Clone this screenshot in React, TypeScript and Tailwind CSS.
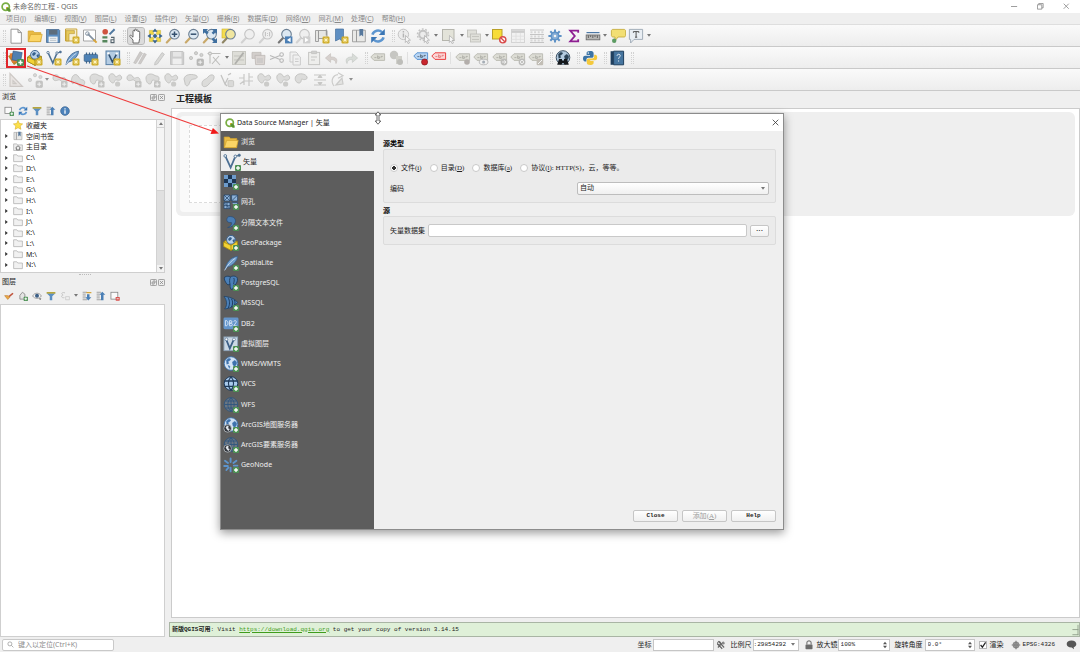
import type { ReactNode } from "react";

const BLUE = "#4b7fb5";
const DARK = "#34506e";
const GREY = "#c3c3c3";

/* ---------- badges shared by several icons ---------- */

const NewBadge = () => (
  <g>
    <rect x="8.5" y="8.5" width="7" height="7" rx="1.2" fill="#d0ad2b" />
    <path d="M12 9.6v4.8M9.6 12h4.8M10.4 10.4l3.2 3.2M13.6 10.4l-3.2 3.2" stroke="#fff6c4" strokeWidth="0.9" />
  </g>
);

const PlusBadge = () => (
  <g>
    <rect x="9" y="9" width="7" height="7" rx="1.2" fill="#4d9155" />
    <path d="M12.5 10.3v4.4M10.3 12.5h4.4" stroke="#fff" strokeWidth="1.5" />
  </g>
);

const GreyBadge = () => (
  <g>
    <rect x="9" y="9" width="6.5" height="6.5" rx="1.2" fill="#b9b9b7" />
    <path d="M12.2 10.2v4M10.2 12.2h4" stroke="#f1f1f1" strokeWidth="1" />
  </g>
);

const Cursor = () => <path d="M8.5 7.5l5 4.6-2.4.2 1.4 2.6-1.4.7-1.3-2.6-1.5 1.5z" fill="#f6f6f6" stroke="#a9a9a9" strokeWidth="0.7" />;

const Lens = ({ fill = "#dce8f2", stroke = "#6b7f93", handle = "#c9a96a", children }: { fill?: string; stroke?: string; handle?: string; children?: ReactNode }) => (
  <g>
    <path d="M6 10L1.8 14.4" stroke={handle} strokeWidth="2.2" strokeLinecap="round" />
    <circle cx="9.5" cy="6.2" r="4.8" fill={fill} stroke={stroke} strokeWidth="1.1" />
    {children}
  </g>
);

const Globe = ({ fill = "#c9dcef", line = "#3f6ea1", land = false }: { fill?: string; line?: string; land?: boolean }) => (
  <g stroke={line} strokeWidth="0.9" fill="none">
    <circle cx="8" cy="7.5" r="6.8" fill={fill} />
    {land ? (
      <path d="M3.4 4l2.4-1.8 2 .8-1 1.6-1.8 1 .8 1.8-2 .8zM9.4 6l2.4-1.8 1.8 1.8v2l-1.8 2.6-1.8-1.6zM5 9.4l2 .8-.6 2.2z" fill={line} strokeWidth="0.4" />
    ) : (
      <path d="M1.4 7.5h13.2M8 .8v13.4M2.4 4h11.2M2.4 11h11.2M8 .8C3.8 4 3.8 11 8 14.2M8 .8c4.2 3.2 4.2 10.2 0 13.4" />
    )}
  </g>
);

const VNodes = ({ color = "#4c6f92" }: { color?: string }) => (
  <g stroke={color} fill="none">
    <path d="M2 2.5l4.8 10.5L11 3" strokeWidth="1.6" />
    <path d="M11 3l3.5-1" strokeWidth="1" />
    <circle cx="2" cy="2.6" r="1.2" fill="#f5f5f5" strokeWidth="0.8" />
    <circle cx="11" cy="3" r="1.2" fill="#f5f5f5" strokeWidth="0.8" />
    <circle cx="14.4" cy="2" r="1.1" fill={color} strokeWidth="0.5" />
  </g>
);

const Feather = () => (
  <g>
    <path d="M2 15C3 8 7 2.5 14.5 1.2 14.8 5 10 11 4.4 12z" fill="#6f9dcb" stroke="#3b618a" strokeWidth="0.8" />
    <path d="M1.6 15.4C4.5 10 8 6 12.4 3.2" stroke="#dbe9f6" strokeWidth="0.8" fill="none" />
  </g>
);

const Shape = ({ d }: { d: string }) => <path d={d} fill="#d7d7d5" stroke="#b4b4b2" strokeWidth="0.9" strokeLinejoin="round" />;

const Label = ({ fill = "#dcdcd4", stroke = "#bdbdb5", ink = "#a9a9a1", y = 3 }: { fill?: string; stroke?: string; ink?: string; y?: number }) => (
  <g transform={`translate(0 ${y})`}>
    <path d="M.8 4L4 .8h10.6v6.6H4z" fill={fill} stroke={stroke} strokeWidth="1" />
    <path d="M4.4 4.6h2M7.6 2.4v3h1.8v-1.6H7.6M11 4.8v-1.4h1.8" stroke={ink} strokeWidth="0.8" fill="none" />
  </g>
);

/* ---------- 16 × 16 icon drawings ---------- */

const icons: Record<string, ReactNode> = {
  new: <path d="M3 1.2h7l3.4 3.4v10.6H3zM10 1.2v3.4h3.4" fill="#fff" stroke="#8d8d8d" strokeWidth="0.9" />,
  open: (
    <g stroke="#d3a32c" strokeWidth="0.7">
      <path d="M1.2 13.6V3h5l1.4 1.6h6.2v9z" fill="#e9bb45" />
      <path d="M1.4 13.6L3.6 6.4h11.6l-1.8 7.2z" fill="#fbd566" />
    </g>
  ),
  save: (
    <g>
      <path d="M1.5 1.5h12.4l.8.8v12.2H1.5z" fill="#5d8fc1" stroke="#476a8f" strokeWidth="0.8" />
      <rect x="4" y="2" width="8.4" height="4.6" fill="#5d6d7c" />
      <rect x="3.6" y="8.6" width="9" height="5.8" fill="#eef1f3" />
      <path d="M5 10.4h6.2M5 12.4h6.2" stroke="#b4bcc4" strokeWidth="0.8" />
    </g>
  ),
  layoutNew: (
    <g>
      <path d="M1.5 1h11.3v12H1.5z" fill="#f6efd4" stroke="#c9a53a" strokeWidth="1" />
      <path d="M2 2.6h8.4v3H5v7.2H2z" fill="#e6c95c" stroke="#b8962d" strokeWidth="0.6" />
      <NewBadge />
    </g>
  ),
  layoutManager: (
    <g>
      <path d="M1.5 2h12v11h-12z" fill="#fff" stroke="#9b9b9b" strokeWidth="0.9" />
      <path d="M5.6 5.6l7 7" stroke="#8392a1" strokeWidth="1.6" />
      <circle cx="5.4" cy="5.6" r="1.8" fill="none" stroke="#8392a1" strokeWidth="1" />
      <path d="M11.6 11.6l3 3" stroke="#d9a63a" strokeWidth="2" />
    </g>
  ),
  style: (
    <g>
      <circle cx="4.2" cy="3.8" r="2.8" fill="#cf5440" />
      <path d="M8.5 6.4L13.6 1.2" stroke="#4f789f" strokeWidth="2" />
      <path d="M1.4 8.2h5v2.4h-5zM1.4 12h5v2.6h-5z" fill="#56875c" />
      <path d="M10 9.4h3v5.2h-3v-2.8h3" stroke="#56656e" strokeWidth="1.1" fill="none" />
    </g>
  ),
  hand: (
    <path
      d="M5 15V12L1.8 8.4c-.4-1 .8-1.6 1.5-.8L5 9.2V3.2c0-1.2 1.6-1.2 1.6 0V2c0-1.2 1.7-1.2 1.7 0v.6c0-1.1 1.7-1 1.7.2v1c.2-1 1.7-.8 1.7.3v6.4L10.8 15z"
      fill="#fff"
      stroke="#5e5e5e"
      strokeWidth="0.9"
      strokeLinejoin="round"
    />
  ),
  panSelection: (
    <g>
      <path d="M2.4 2.4h4v4h-4zM9.6 2.4h4v4h-4zM2.4 9.6h4v4h-4zM9.6 9.6h4v4h-4z" fill="#f1d848" stroke="#c5ac2f" strokeWidth="0.5" />
      <path d="M8 .4l2.6 3.4H5.4zM8 15.600l2.600-3.400H5.400zM.4 8l3.400-2.600v5.200zM15.600 8l-3.400-2.600v5.200z" fill="#39648f" />
      <path d="M8 5.600L10.400 8 8 10.400 5.600 8z" fill="#39648f" />
    </g>
  ),
  zoomIn: (
    <Lens>
      <path d="M9.5 3.4v5.6M6.7 6.2h5.6" stroke={DARK} strokeWidth="1.5" />
    </Lens>
  ),
  zoomOut: (
    <Lens>
      <path d="M6.7 6.2h5.6" stroke={DARK} strokeWidth="1.5" />
    </Lens>
  ),
  zoomFull: (
    <g>
      <Lens />
      <path d="M1 1h5L4.6 2.6 6.6 4.6 4.8 6.4 2.6 4.4 1 6zM15 1v5l-1.6-1.4-2 2L9.6 4.8l2-2L10 1zM15 15h-5l1.6-1.6-2-2 1.8-1.8 2 2L15 10z" fill="#3f6f9f" />
    </g>
  ),
  zoomSelection: (
    <g>
      <rect x="1" y="1" width="8" height="9" fill="#f4dc4e" stroke="#cdb12f" strokeWidth="0.6" />
      <Lens fill="#f0e6a0" handle="#8f8665" />
    </g>
  ),
  zoomLayer: <Lens fill="#efefef" stroke="#c4c4c4" handle="#d2d2d2" />,
  zoomNative: (
    <Lens fill="#efefef" stroke="#c4c4c4" handle="#d2d2d2">
      <path d="M7.4 4v4.4M11.6 4v4.4M9.5 5v.8M9.5 7v.8" stroke="#b9b9b9" strokeWidth="0.9" />
    </Lens>
  ),
  zoomLast: (
    <g>
      <Lens handle="#777" />
      <rect x="8" y="8.4" width="7.4" height="7" fill={BLUE} />
      <path d="M13.6 9.6L10 11.9l3.6 2.3z" fill="#fff" />
    </g>
  ),
  zoomNext: (
    <g>
      <Lens fill="#efefef" stroke="#c4c4c4" handle="#d2d2d2" />
      <rect x="8" y="8.4" width="7.4" height="7" fill="#cfcfcf" />
      <path d="M10 9.6l3.6 2.3-3.6 2.3z" fill="#fff" />
    </g>
  ),
  mapView: (
    <g>
      <path d="M1.5 2.5h3v11h-3zM4.5 2.5H13v8H4.5z" fill="#e6e6e4" stroke="#989898" strokeWidth="0.9" />
      <path d="M12.4 1.6v6" stroke="#989898" strokeWidth="1.2" />
      <NewBadge />
    </g>
  ),
  bookmarkNew: (
    <g>
      <path d="M2.5 1h8v13.4L6.5 11l-4 2z" fill="#5f8fc2" stroke="#48719d" strokeWidth="0.7" />
      <NewBadge />
    </g>
  ),
  bookmarks: (
    <g>
      <path d="M1.5 2.2h4v11.6h-4zM5.5 2.2h8.8v11.6H5.5z" fill="#e9e9e7" stroke="#9b9b9b" strokeWidth="0.9" />
      <path d="M8.4 1h3.8v7.6l-1.9-1.7-1.9 1.7z" fill="#56789c" />
    </g>
  ),
  refresh: (
    <g fill="none" stroke="#5d96d0" strokeWidth="2.6">
      <path d="M2.4 6.6C3.8 2.4 9 1.2 12 4.2M13.6 9.4c-1.4 4.2-6.6 5.4-9.6 2.4" />
      <path d="M14.8 1v6H8.8zM1.2 15V9h6z" fill="#3a76b5" stroke="none" />
    </g>
  ),
  identify: (
    <g>
      <circle cx="6.4" cy="6.4" r="5.2" fill="#ececec" stroke={GREY} />
      <path d="M6.4 3v1.4M6.4 5.4v4" stroke="#b4b4b4" strokeWidth="1.4" />
      <Cursor />
    </g>
  ),
  action: (
    <g>
      <circle cx="7" cy="6.6" r="3.8" fill="#ececec" stroke={GREY} strokeWidth="2" />
      <circle cx="7" cy="6.6" r="5.6" fill="none" stroke={GREY} strokeWidth="1.4" strokeDasharray="1.8 1.7" />
      <Cursor />
    </g>
  ),
  select: (
    <g>
      <rect x="1.5" y="1.5" width="11.5" height="11" fill="#e3e3d9" stroke="#b5b5ad" />
      <Cursor />
    </g>
  ),
  selectForm: (
    <g fill="#e0e0da" stroke="#bfbfb9" strokeWidth="0.8">
      <rect x="1.5" y="2" width="9" height="7" />
      <rect x="4.5" y="6" width="10" height="8" />
      <path d="M6 8.5h7M6 11.5h7" />
    </g>
  ),
  deselect: (
    <g>
      <rect x="1.5" y="1.5" width="9.5" height="9.5" fill="#f7dc38" stroke="#b9a028" />
      <circle cx="11.8" cy="11.8" r="3.1" fill="#fff" stroke="#d94a4a" strokeWidth="1.4" />
      <path d="M9.8 9.8l4 4" stroke="#d94a4a" strokeWidth="1.3" />
    </g>
  ),
  table: (
    <g>
      <rect x="1.5" y="1.5" width="13" height="13" fill="#f1f1f1" stroke="#d4d4d4" />
      <path d="M1.5 3.6h13" stroke="#cccccc" strokeWidth="2.6" />
      <path d="M6 5v9.5M10.4 5v9.5M1.5 8.2h13M1.5 11.4h13" stroke="#dedede" strokeWidth="0.8" />
    </g>
  ),
  calculator: (
    <g stroke="#c4c4c4">
      <path d="M1 2h14M1 6.5h14M1 10.5h14M1 14.5h14" strokeWidth="1" />
      <path d="M1.5 4.2h13M1.5 8.6h13M1.5 12.6h13" strokeWidth="2" strokeDasharray="2 1.6" stroke="#d6d6d6" />
    </g>
  ),
  gear: (
    <g stroke="#5f92c6" fill="none">
      <path d="M8 1.400v13.200M1.400 8h13.200M3.300 3.300l9.400 9.400M12.700 3.300l-9.400 9.400" strokeWidth="2" />
      <circle cx="8" cy="8" r="3.8" fill="#86aed6" strokeWidth="1.4" />
      <circle cx="8" cy="8" r="1.3" fill="#f2f2f2" stroke="none" />
    </g>
  ),
  sigma: <path d="M12.2 4.8V2.600H4.200L8.800 8l-4.600 5.400h8v-2.200" fill="none" stroke="#8e1f92" strokeWidth="1.8" />,
  measure: (
    <g>
      <path d="M1.5 4.6h13" stroke="#4c78a5" strokeWidth="1.2" />
      <rect x="1.2" y="7" width="13.6" height="4.8" fill="#b5b5b3" stroke="#6d6d6d" strokeWidth="0.9" />
      <path d="M3.4 7.4v2.6M5.6 7.4v1.6M7.8 7.4v2.6M10 7.4v1.6M12.4 7.4v2.6" stroke="#4f4f4f" strokeWidth="0.8" />
    </g>
  ),
  mapTips: (
    <g>
      <path d="M3 1.4h11c1 0 1.6.8 1.6 1.6v4.4c0 1-.8 1.6-1.6 1.6H8L5 13V9H3C2 9 1.4 8.2 1.4 7.4V3C1.4 2 2 1.4 3 1.4z" fill="#f2df74" stroke="#c6ae41" strokeWidth="0.9" />
      <circle cx="4.2" cy="12.8" r="2.2" fill="#5c9b62" />
    </g>
  ),
  annotation: (
    <g>
      <path d="M1.4 1.4h13.2v10H6l-3.4 3.6v-3.6H1.4z" fill="#e9eef3" stroke="#9aa6b2" strokeWidth="0.9" />
      <path d="M5.4 4.8V3.600h5.400v1.200M8.100 3.600v5.600M7 9.200h2.200" stroke="#444" strokeWidth="0.9" fill="none" />
    </g>
  ),
  dataSource: (
    <g>
      <path d="M0 6l6-3 6 8-6 4z" fill="#b5872b" />
      <path d="M1.6 3.4l8-1 3 8.6-8.4 2z" fill="#e27e32" />
      <path d="M5.2 1l9 1.6-1.6 9-8.800-1.800z" fill="#4f7fb0" stroke="#33587f" strokeWidth="0.6" />
      <PlusBadge />
    </g>
  ),
  geopackage: (
    <g>
      <path d="M.6 7l5-3.6 8.8 3v5L8 15.4.6 11.4z" fill="#e3be22" stroke="#8f7714" strokeWidth="0.7" />
      <circle cx="8" cy="4.8" r="4.4" fill="#b9d0e8" stroke="#35608d" strokeWidth="0.9" />
      <path d="M5 4l2-2 2 1-1 2-2 1zM9.4 5.4l2-1.6.6 2.4-1.6 1.4z" fill="#35608d" />
      <path d="M.6 7L8 10.4l6.4-4v5L8 15.4.6 11.4z" fill="#f2d235" stroke="#8f7714" strokeWidth="0.6" />
      <path d="M8 10.4v5" stroke="#8f7714" strokeWidth="0.7" />
    </g>
  ),
  vector: <VNodes />,
  feather: <Feather />,
  memory: (
    <g>
      <path d="M3.5 2.4v11M6.5 2.4v11M9.5 2.4v11M12.5 2.4v11" stroke="#41698f" strokeWidth="1.2" />
      <rect x="1.2" y="4.4" width="13.4" height="7" rx="1" fill="#4e82b6" stroke="#34597f" strokeWidth="0.7" />
    </g>
  ),
  virtual: (
    <g>
      <rect x="1" y="1" width="13.6" height="13.6" fill="#b4cce3" stroke="#577ea5" />
      <path d="M3.4 3.4L7.4 12l4.4-8.4" fill="none" stroke="#2f4f71" strokeWidth="1.6" />
      <circle cx="3.4" cy="3.4" r="1.2" fill="#fff" />
      <circle cx="11.8" cy="3.6" r="1.2" fill="#fff" />
    </g>
  ),
  editsAll: (
    <g fill="#cdcac8" stroke="#b9b6b4" strokeWidth="0.5">
      <path d="M1.6 13L8 1.6l2.6 1.6L4 13.6zM6.4 13.6L12 3l2.4 1.4L8.6 14z" />
    </g>
  ),
  pencil: <path d="M4 12.6L11 2.6l2.4 1.6L6.4 14l-2.800 1z" fill="#d8d8d6" stroke="#bbb" strokeWidth="0.7" />,
  saveGrey: (
    <g>
      <path d="M1.5 1.5h12.4l.8.8v12.2H1.5z" fill="#cdcdcd" stroke="#bdbdbd" strokeWidth="0.8" />
      <rect x="4" y="2" width="8.4" height="4.6" fill="#e6e6e6" />
      <rect x="3.6" y="8.6" width="9" height="5.8" fill="#efefef" />
    </g>
  ),
  points: (
    <g fill="#d2d2d0" stroke="#b6b6b4" strokeWidth="0.7">
      <circle cx="3" cy="8" r="1.6" />
      <circle cx="8" cy="3.2" r="1.6" />
      <circle cx="13.4" cy="5" r="1.6" />
      <GreyBadge />
    </g>
  ),
  vertexTool: (
    <g fill="none" stroke="#bdbdbb" strokeWidth="1.1">
      <path d="M1.5 3.5h13M4 3.5v10M6 14L13 6M7 7l7 8" />
      <circle cx="4" cy="3.5" r="1.4" fill="#eee" />
    </g>
  ),
  editForm: (
    <g>
      <rect x="1.5" y="1.5" width="13" height="13" fill="#deded8" stroke="#c8c8c2" />
      <path d="M3 6h10M3 10h10" stroke="#c3c3bd" />
      <path d="M4 14L12.6 2.6" stroke="#b0b0ac" strokeWidth="1.8" />
    </g>
  ),
  trash: (
    <g>
      <path d="M2 2.4h9v6H2z" fill="#d2cecb" stroke="#c0bbb8" strokeWidth="0.8" />
      <path d="M5 5.400h10l-.6 9.200H5.600z" fill="#dad5d2" stroke="#bdb8b5" strokeWidth="0.8" />
      <path d="M8 8v5M10 8v5M12 8v5" stroke="#bbb" strokeWidth="0.8" />
    </g>
  ),
  cut: (
    <g fill="none" stroke="#b9b9b9" strokeWidth="1.1">
      <path d="M1 5.6L11 9.6M1 9.4L11 5.4" />
      <circle cx="12.6" cy="4.6" r="1.8" />
      <circle cx="12.6" cy="10.6" r="1.8" />
    </g>
  ),
  copy: (
    <g fill="#f0f0f0" stroke="#c7c7c7" strokeWidth="0.9">
      <path d="M3 2h6l2 2v8H3z" />
      <path d="M6 5h5l2.4 2v8H6z" />
      <path d="M8 9h3.6M8 11.5h3.6" />
    </g>
  ),
  paste: (
    <g fill="#eeeeec" stroke="#c6c6c4" strokeWidth="1">
      <rect x="2.6" y="2.4" width="11" height="12.2" />
      <path d="M5.6 1.2h5v2.4h-5z" fill="#d0d0ce" />
      <path d="M5 7h6M5 10h4" />
    </g>
  ),
  undo: <path d="M12 13.6c2-3.6.6-7-5.4-6.6V3.6L1.4 8l5.2 4.4V9.6c3-.4 5 .8 5.4 4z" fill="#d6d0cd" stroke="#c3bebb" strokeWidth="0.6" />,
  redo: <path d="M4 13.6C2 10 3.4 6.6 9.4 7V3.6L14.6 8l-5.2 4.4V9.6c-3-.4-5 .8-5.4 4z" fill="#d8dcd8" stroke="#c2c6c2" strokeWidth="0.6" />,
  label: <Label />,
  labelDiagram: (
    <g>
      <circle cx="6" cy="5" r="4.2" fill="#c6c6c2" />
      <path d="M8 6h6v8H8z" fill="#d0d0ca" />
      <circle cx="12" cy="12" r="3" fill="#bdbdb9" />
    </g>
  ),
  labelPin: (
    <g>
      <Label fill="#b7d4f3" stroke="#5b94d2" ink="#4a5a6a" y={2} />
      <circle cx="11.6" cy="12" r="3.1" fill="#c9252d" stroke="#7e1419" strokeWidth="0.6" />
    </g>
  ),
  labelRed: <Label fill="#fbd5d5" stroke="#e94141" ink="#e07070" y={2} />,
  labelPinGrey: (
    <g>
      <Label />
      <circle cx="12" cy="12" r="2.8" fill="#b3aeab" />
    </g>
  ),
  labelShow: (
    <g>
      <Label />
      <ellipse cx="10.6" cy="12" rx="4.4" ry="2.8" fill="#f0f0f0" stroke="#b0b0b0" strokeWidth="0.8" />
      <circle cx="10.6" cy="12" r="1.5" fill="#a5adb5" />
    </g>
  ),
  labelMove: (
    <g>
      <Label />
      <circle cx="12" cy="12" r="3.4" fill="#bcbcba" />
      <path d="M10 12h3.6M12.2 10.4l1.8 1.6-1.8 1.6" stroke="#f4f4f4" strokeWidth="0.9" fill="none" />
    </g>
  ),
  labelRotate: (
    <g>
      <Label />
      <circle cx="12" cy="12" r="3.4" fill="#bcbcba" />
      <circle cx="12" cy="12" r="1.6" stroke="#f4f4f4" strokeWidth="0.9" fill="none" />
    </g>
  ),
  labelEdit: (
    <g>
      <Label />
      <rect x="8.6" y="8.8" width="6.6" height="6.4" rx="1" fill="#c2beb6" />
      <path d="M10 14l4-4" stroke="#f4f4f4" />
    </g>
  ),
  metasearch: (
    <g>
      <Globe fill="#b4cbe0" line="#2b4256" land />
      <path d="M4 9h3v1.400h2V9h3l1.800 5.800H9.400l-.6-1.800H7.200l-.6 1.800H2.200z" fill="#14181c" />
    </g>
  ),
  python: (
    <g>
      <path d="M8 1c-3 0-3.4 1-3.4 2.2V5H8v.8H3.2C1.6 5.8 1 7 1 8.6s.8 2.9 2 2.9h1.4V9.8c0-1.2.8-2 2-2h3.4c1 0 1.8-.8 1.8-1.8V3.2C11.6 1.6 10.4 1 8 1z" fill="#3c74a5" />
      <path d="M8.2 15c3 0 3.4-1 3.4-2.2V11H8.2v-.8H13c1.6 0 2.2-1.2 2.2-2.8s-.8-2.6-2-2.6h-1v1.8c0 1.2-.8 2-2 2H6.6c-1 0-1.8.8-1.8 1.8v2.4c0 1.6 1.2 2.2 3.4 2.2z" fill="#f4c93c" />
      <circle cx="6.3" cy="3" r="0.7" fill="#fff" />
    </g>
  ),
  help: (
    <g>
      <path d="M1.6 1.2h3v13.6h-3z" fill="#20405f" />
      <path d="M4.6 1.2h10v13.6h-10z" fill="#46759f" stroke="#20405f" />
      <path d="M8 5.800c.2-2.200 3.600-2 3.200.2-.2 1.200-1.600 1.200-1.600 2.800M9.600 10.400v1.200" fill="none" stroke="#dfe9f2" strokeWidth="1" />
    </g>
  ),
  triangle: <path d="M2 1.6v12.8h12.4zM5 8.6v3h3z" fill="#e6e1de" stroke="#c4beba" strokeWidth="1.2" fillRule="evenodd" />,
  shapeMove: (
    <g>
      <Shape d="M1 6c0-4 5-4 6-1s4-1 6 1 1 5-2 4-3-3-5-2-5 1-5-2z" />
      <GreyBadge />
    </g>
  ),
  shapeRotate: <Shape d="M2 11C0 5 5 0 8 4s2 3 5 4 2 6-2 6-3-4-5-4-3 3-4 1z" />,
  shapeSimplify: (
    <g>
      <Shape d="M1 6C1 2 6 1 9 3s5 0 5 4-4 1-6 1-1 4-3 4-4-2-4-6z" />
      <GreyBadge />
    </g>
  ),
  reshape: <Shape d="M2 7C3 2 9 2 13 3s2 4-1 4-4 2-5 5-4 2-4-1z" />,
  offset: <Shape d="M2 12c0-5 4-4 6-7s7-3 6 1-3 3-5 6-7 4-7 0z" />,
  split: (
    <g fill="none" stroke="#b6b6b4" strokeWidth="1.2">
      <path d="M2 3l4 9 3-6M9 3l3-1.6M6 12l2 2" />
      <rect x="9" y="8.6" width="5.6" height="6" rx="1" fill="#d4d4d2" strokeWidth="0.8" />
    </g>
  ),
  splitParts: <path d="M6 2v11M11 1v13M2 12l4-3M1 6h5M11 5h4M6 9h9" fill="none" stroke="#bfbfbd" strokeWidth="1.2" />,
  merge: (
    <g>
      <Shape d="M2 4c1-3 5-3 6 0s4-3 6 0-1 5-4 4-2 3-4 3-5-4-4-7z" />
      <circle cx="10.6" cy="12" r="2.6" fill="#c2c2c0" />
    </g>
  ),
  rotatePoint: <Shape d="M3 4c3-4 10-2 11 1s-4 3-5 2 0 4-3 4-5-4-3-7z" />,
  align: <path d="M2 3h12M2 8h12M2 13h12M8 3l-2 2.5h4zM8 13l-2-2.5h4z" fill="#bdbdbb" stroke="#bdbdbb" strokeWidth="1" />,
  rotateFeature: (
    <g fill="none" stroke="#c2c2c0" strokeWidth="1.2">
      <path d="M4 14C0 9 3 3 8 2.6M8 .8l5 3-5 2.4" />
      <path d="M6 13l6-7 1 6z" fill="#e0e0de" />
    </g>
  ),
  addLayer: (
    <g>
      <rect x="1.5" y="2" width="10.5" height="10" fill="#fafafa" stroke="#7d7d7d" strokeWidth="1.2" />
      <PlusBadge />
    </g>
  ),
  filter: (
    <g>
      <path d="M1 3.4h14l-5 5v6.2H6V8.4z" fill="#5b8fc2" />
      <path d="M1 1.6h14v2.6H1z" fill="#b7a63c" />
    </g>
  ),
  collapse: (
    <g>
      <path d="M1 2h7M1 5h5M1 8h5M1 11h5M1 14h7" stroke="#8a8a8a" strokeWidth="1.2" />
      <path d="M10 1l5 5h-3v8.6H8V6H5.4z" fill="#4a7fb5" />
    </g>
  ),
  expand: (
    <g>
      <path d="M1 2h7M1 5h5M1 8h5M1 11h5M1 14h7" stroke="#8a8a8a" strokeWidth="1.2" />
      <path d="M10 15l5-5h-3V5H8v5H5.4z" fill="#4a7fb5" />
      <path d="M7 2.6h8" stroke="#d4a53a" strokeWidth="2" />
    </g>
  ),
  info: (
    <g>
      <circle cx="8" cy="8" r="7" fill="#4c82ba" stroke="#35618f" />
      <path d="M8 3.4v2M8 6.8v5.6" stroke="#fff" strokeWidth="2" />
    </g>
  ),
  brush: (
    <g>
      <path d="M8 9l6.400-5.400" stroke="#c0533b" strokeWidth="2.600" />
      <path d="M1 7.400c4-.6 7 0 8.400 2.400L6 13.600z" fill="#e8a545" stroke="#b7762a" strokeWidth="0.8" />
    </g>
  ),
  addGroup: (
    <g>
      <path d="M3 13V7l4-5 4 3v8z" fill="#e4e4e4" stroke="#7e7e7e" strokeWidth="1.2" />
      <PlusBadge />
    </g>
  ),
  eye: (
    <g>
      <path d="M1 8c3-6 11-6 14 0-3 5-11 5-14 0z" fill="#f2f2f2" stroke="#777" />
      <circle cx="8" cy="7.6" r="3.2" fill="#3c5f86" />
      <path d="M11 12h4l-2 2.4z" fill="#444" />
    </g>
  ),
  epsilon: (
    <g fill="none" stroke="#c0c0c0" strokeWidth="1.4">
      <path d="M8 3C3 1 1 5 5 6.4 1 7 2 12 7 10.6" />
      <path d="M9 9h6v5H9z" strokeWidth="1" />
    </g>
  ),
  removeLayer: (
    <g>
      <rect x="1.5" y="2" width="11" height="11" fill="#fafafa" stroke="#7d7d7d" strokeWidth="1.2" />
      <rect x="9" y="9.4" width="6.6" height="6" rx="1" fill="#d9534f" />
      <path d="M10.6 12.4h3.4" stroke="#fff" strokeWidth="1.3" />
    </g>
  ),
  star: <path d="M8 .8l2.2 4.8 5.2.6-3.9 3.5 1.1 5.2L8 12.3l-4.6 2.6 1.1-5.2L.6 6.2l5.2-.6z" fill="#fbe04b" stroke="#d8ac22" strokeWidth="0.9" />,
  home: (
    <g>
      <path d="M1 13.6V3h5l1.4 1.6H15v9z" fill="#ededed" stroke="#a3a3a3" />
      <path d="M4 9.400L8 6l4 3.400M5.400 9v3.600h5.200V9" fill="none" stroke="#555" strokeWidth="1.200" />
    </g>
  ),
  folder: <path d="M1 13.8V2.8h5l1.6 2H15v9z" fill="#f1f1f1" stroke="#a9a9a9" strokeWidth="1.1" />,
  raster: (
    <g>
      <rect x="1" y="1" width="12" height="12" fill="#6d9bcb" />
      <path d="M5 1h4v4H5zM1 5h4v4H1zM9 5h4v4H9zM5 9h4v4H5z" fill="#1d3653" />
    </g>
  ),
  mesh: (
    <g fill="#8fb3d9" stroke="#28496d" strokeWidth="0.8">
      <path d="M1 1h6v6H1zM8.6 1h6v6h-6zM1 8.6h6v6H1z" />
      <path d="M1 1l6 6M7 1L1 7M8.6 7l6-6M1 8.6l6 6M4 8.6v6M1 11.6h6M8.6 8.6h6v6" />
    </g>
  ),
  comma: <path d="M6 1.6c5-.6 7.6 3 6 6.4-1.2 2.6-4 4.4-7.4 4.6C8 11 9 9.4 8.4 7.6 5 8 3.6 6.4 3.8 4.6 4 3 4.8 1.8 6 1.6z" fill="#4a7db4" stroke="#2c4e76" strokeWidth="0.8" />,
  postgres: (
    <g>
      <path d="M1.6 2.2C4 .6 6 1.2 7.4 1.8 10 .6 13.6.8 14.4 3.4c.6 2.6-1 5-2.2 6.6h-1.6c-.2 1.6 0 4-1.6 4.4-1.8.2-2-1.8-2-5.4L5 10C2.6 8 .6 4 1.6 2.2z" fill="#4b80b8" stroke="#1f3c5c" strokeWidth="0.9" />
      <path d="M7.4 2c-1 2-1 4.6-.4 7M10.8 3c1 2 0 4.4-.2 6" stroke="#1f3c5c" strokeWidth="0.9" fill="none" />
    </g>
  ),
  mssql: (
    <g>
      <path d="M1 1.4C6 1.6 11.6 3.4 14.6 7.4 12 11 7 13.6 1.6 14 4.6 10 4 5.6 1 1.4z" fill="#4b80b8" stroke="#234466" strokeWidth="0.8" />
      <path d="M5 2.4c2 3.4 2 7.4 0 11M8.4 3.6c1.6 2.6 1.6 6 0 8.6M11.4 5c.8 1.6.8 3.6 0 5.4" stroke="#1c3856" strokeWidth="0.9" fill="none" />
    </g>
  ),
  db2: (
    <g>
      <rect x="0.5" y="1.6" width="15" height="11.6" rx="1.4" fill="#6495cb" />
      <path d="M2.4 4.6v5.2h.8c2.4 0 2.4-5.2 0-5.2zM6.6 4.6v5.2h1.6c1.6 0 1.4-2.6 0-2.6H6.6h1.3c1.4 0 1.4-2.6 0-2.6zM10.8 5.6c.4-1.6 3-1.2 2.4.6l-2.4 3.6h2.8" fill="none" stroke="#dce9f7" strokeWidth="0.9" />
    </g>
  ),
  virtualLight: (
    <g>
      <rect x="1" y="1" width="13.6" height="13.6" fill="#cbd8e4" stroke="#8fa5ba" />
      <path d="M3 3l3.8 9.4L11 3" fill="none" stroke="#3c5f86" strokeWidth="1.8" />
      <circle cx="3.4" cy="3.4" r="1.4" fill="#fff" stroke="#3c5f86" strokeWidth="0.6" />
      <circle cx="11" cy="3.4" r="1.4" fill="#fff" stroke="#3c5f86" strokeWidth="0.6" />
    </g>
  ),
  wms: <Globe fill="#d3e4f5" line="#3c72ad" land />,
  wcs: (
    <g>
      <circle cx="8" cy="7.5" r="6.8" fill="#a9cbed" stroke="#1e3a5a" />
      <path d="M1.400 5h13.200M1.400 10.400h13.200" stroke="#1e3a5a" strokeWidth="1.4" />
      <path d="M8 .8C4.6 4 4.6 11 8 14.2c3.4-3.2 3.4-10.2 0-13.4z" fill="none" stroke="#1e3a5a" strokeWidth="1.1" />
    </g>
  ),
  wfs: <Globe fill="#6b7681" line="#2f567f" />,
  arcgisMap: (
    <g>
      <Globe fill="#cfe0f2" line="#3c72ad" land />
      <circle cx="4.6" cy="11.4" r="3.8" fill="#30343a" stroke="#c9ced4" strokeWidth="0.7" />
      <path d="M2.600 10.400l1.600-1.800 1.600.8-.8 1.800 1.800.8-1.400 2-1.600-1.600z" fill="#dfe5eb" />
    </g>
  ),
  arcgisFeature: (
    <g>
      <Globe fill="#6b7681" line="#2f567f" />
      <circle cx="4.6" cy="11.4" r="3.8" fill="#30343a" stroke="#c9ced4" strokeWidth="0.7" />
      <path d="M2.600 10.400l1.600-1.800 1.600.8-.8 1.800 1.800.8-1.400 2-1.600-1.600z" fill="#dfe5eb" />
    </g>
  ),
  geonode: (
    <g stroke="#5d94cc" strokeWidth="1.9" strokeLinecap="round">
      <path d="M7.600 1.400v3.600M7.600 10.600v3.800M2 3.800l3 2.200M13.400 3.800l-3 2.200M1.200 9h3.600M3.400 13l2-2.400M10.800 8.600h3.600" />
    </g>
  ),
  cog: (
    <g>
      <path d="M4 2l9 10M2 6l8 8M3 12l9-9" stroke="#666" strokeWidth="1.8" />
      <circle cx="5" cy="5" r="2.6" fill="none" stroke="#666" strokeWidth="1.4" />
      <circle cx="11.6" cy="5" r="2.2" fill="#888" />
    </g>
  ),
  lock: (
    <g>
      <path d="M4.6 7V4.4c0-4 6.8-4 6.8 0V7" fill="none" stroke="#777" strokeWidth="1.8" />
      <rect x="2.4" y="7" width="11.2" height="7.6" rx="1" fill="#6a6a6a" />
    </g>
  ),
  crs: (
    <g fill="none" stroke="#7e7e7e" strokeWidth="1.3">
      <circle cx="8" cy="8" r="5" fill="#a5a5a5" />
      <path d="M8 1v14M1 8h14M8 3C5 6 5 10 8 13M8 3c3 3 3 7 0 10" />
    </g>
  ),
  bubble: <path d="M8 2c4.4 0 7 2.2 7 5.2 0 2.4-1.6 4-3.8 4.8L11.6 15 8.4 12.4C4 12.6 1 10.4 1 7.2S3.6 2 8 2z" fill="#555" />,
  magnifier: (
    <g fill="none" stroke="#8a8a8a" strokeWidth="1.5">
      <circle cx="6.6" cy="6.6" r="4.6" />
      <path d="M10 10l4.6 4.6" />
    </g>
  ),
};

const newBadged = ["geopackageNew", "vectorNew", "featherNew", "memoryNew", "virtualNew"];

const Icon = ({ name, className = "size-4" }: { name: string; className?: string }) => (
  <svg viewBox="0 0 16 16" className={`shrink-0 ${className}`} aria-hidden="true">
    {newBadged.includes(name) ? icons[name.replace("New", "")] : icons[name]}
    {newBadged.includes(name) && <NewBadge />}
  </svg>
);

const Caret = ({ className = "w-1" }: { className?: string }) => (
  <svg viewBox="0 0 8 6" className={`shrink-0 ${className}`} aria-hidden="true">
    <path d="M0 0h8L4 5.6z" fill="#777" />
  </svg>
);

/* ---------- tool bars ---------- */

const Handle = () => (
  <span className="mr-[2px] ml-[6px] h-3 w-[3px] shrink-0 border-x border-dotted border-[#d2d2d2] first:ml-[3px]" />
);

const Tools = ({ names, className }: { names: string; className: string }) => (
  <div className={`flex shrink-0 items-center justify-between ${className}`}>
    {names.split(" ").map((name, i) => {
      if (name === "caret") return <Caret key={i} />;
      if (name === "sep") return <span key={i} className="mx-px h-3 w-[2px] border-l border-[#e0e0e0]" />;
      return (
        <button
          key={i}
          type="button"
          aria-label={name}
          className={
            name === "hand"
              ? "rounded-xs bg-[#dcdcdc] outline outline-[#b9b9b9]"
              : name === "dataSource"
                ? "outline-2 outline-[#e0262b]"
                : ""
          }
        >
          <Icon name={name} />
        </button>
      );
    })}
  </div>
);

const ToolBar = ({ children }: { children: ReactNode }) => (
  <div className="flex h-[22px] shrink-0 items-center overflow-hidden border-b border-[#c9c9c9] bg-linear-to-b from-[#fafafa] to-[#ededed]">
    {children}
  </div>
);

const menus = [
  ["项目", "J"],
  ["编辑", "E"],
  ["视图", "V"],
  ["图层", "L"],
  ["设置", "S"],
  ["插件", "P"],
  ["矢量", "O"],
  ["栅格", "R"],
  ["数据库", "D"],
  ["网络", "W"],
  ["网孔", "M"],
  ["处理", "C"],
  ["帮助", "H"],
];

/* ---------- docks ---------- */

const DockTitle = ({ title }: { title: string }) => (
  <div className="flex h-3 shrink-0 items-center pr-1 pl-[2px]">
    <h2 className="flex-1 leading-3 text-[#222]">{title}</h2>
    <button type="button" aria-label="浮动" className="mr-px">
      <svg viewBox="0 0 8 8" className="size-[7px]" fill="none" stroke="#888" strokeWidth="0.9">
        <rect x="0.5" y="0.5" width="7" height="7" rx="1" />
        <path d="M2.4 3.4h2.4v2.4H2.4zM3.6 2.2h2.2v2.2" />
      </svg>
    </button>
    <button type="button" aria-label="关闭">
      <svg viewBox="0 0 8 8" className="size-[7px]" fill="none" stroke="#888" strokeWidth="0.9">
        <rect x="0.5" y="0.5" width="7" height="7" rx="1" />
        <path d="M2.2 2.2l3.6 3.6M5.8 2.2L2.2 5.8" />
      </svg>
    </button>
  </div>
);

const DockTools = ({ names }: { names: string[] }) => (
  <div className="flex h-4 shrink-0 items-center gap-1 pb-px pl-1">
    {names.map((name, i) =>
      name === "caret" ? (
        <Caret key={i} />
      ) : (
        <button key={i} type="button" aria-label={name}>
          <Icon name={name} className="size-[10px]" />
        </button>
      ),
    )}
  </div>
);

const tree = [
  { icon: "star", label: "收藏夹" },
  { icon: "bookmarks", label: "空间书签" },
  { icon: "home", label: "主目录" },
  ...["C", "D", "E", "G", "H", "I", "J", "K", "L", "M", "N"].map((d) => ({ icon: "folder", label: `${d}:\\` })),
  { icon: "folder", label: "" },
];

const BrowserTree = () => (
  <div className="mr-1 flex h-[154px] shrink-0 overflow-hidden border border-[#cfcfcf] bg-white">
    <ul className="grid h-[161px] flex-1 grid-rows-15">
      {tree.map(({ icon, label }) => (
        <li key={label} className="flex items-center">
          <span className="w-3 pl-1">
            {icon !== "star" && label && (
              <svg viewBox="0 0 4 6" className="h-1 w-[3px]">
                <path d="M0 0l4 3-4 3z" fill="#333" />
              </svg>
            )}
          </span>
          <Icon name={icon} className="size-[10px]" />
          <span className="ml-[3px] leading-none text-[#222]">{label}</span>
        </li>
      ))}
    </ul>
    <div className="flex w-2 flex-col border-l border-[#d2d2d2] bg-[#e0e0e0]">
      <span className="flex h-[7px] items-center justify-center bg-[#f3f3f3]">
        <Caret className="w-1 rotate-180" />
      </span>
      <span className="h-16 border-y border-[#d2d2d2] bg-[#f5f5f5]" />
      <span className="mt-auto flex h-[7px] items-center justify-center bg-[#f3f3f3]">
        <Caret />
      </span>
    </div>
  </div>
);

/* ---------- data source manager ---------- */

const sources = [
  { icon: "open", label: "浏览" },
  { icon: "vector", label: "矢量" },
  { icon: "raster", label: "栅格" },
  { icon: "mesh", label: "网孔" },
  { icon: "comma", label: "分隔文本文件" },
  { icon: "geopackage", label: "GeoPackage" },
  { icon: "feather", label: "SpatiaLite" },
  { icon: "postgres", label: "PostgreSQL" },
  { icon: "mssql", label: "MSSQL" },
  { icon: "db2", label: "DB2" },
  { icon: "virtualLight", label: "虚拟图层" },
  { icon: "wms", label: "WMS/WMTS" },
  { icon: "wcs", label: "WCS" },
  { icon: "wfs", label: "WFS" },
  { icon: "arcgisMap", label: "ArcGIS地图服务器" },
  { icon: "arcgisFeature", label: "ArcGIS要素服务器" },
  { icon: "geonode", label: "GeoNode" },
];

const QgisLogo = ({ className }: { className: string }) => (
  <svg viewBox="0 0 16 16" className={`shrink-0 ${className}`} aria-hidden="true">
    <circle cx="7.6" cy="7.6" r="5.8" fill="none" stroke="#7aae45" strokeWidth="2.800" />
    <path d="M8 8h3.2l4.200 4.200v3.200h-3.200L8 11.200z" fill="#5b9430" />
    <path d="M8 8h3.2L8 11.2z" fill="#e8b53c" />
  </svg>
);

const Mnemonic = ({ children }: { children: string }) => (
  <>
    (<u>{children}</u>)
  </>
);

const types = [
  { label: "文件", key: "i", rest: "" },
  { label: "目录", key: "D", rest: "" },
  { label: "数据库", key: "a", rest: "" },
  { label: "协议", key: "l", rest: ": HTTP(S)，云，等等。" },
];

const dialogButton = "h-3 w-[45px] rounded-xs border border-[#c6c6c6] bg-linear-to-b from-white to-[#f0f0f0] leading-[10px]";

const DataSourceManager = () => (
  <section
    role="dialog"
    aria-label="Data Source Manager"
    className="absolute top-[113px] left-[220px] flex h-[417px] w-[564px] flex-col border border-[#8c8c8c] bg-[#efefef] shadow-[0_3px_9px_rgba(0,0,0,0.4)]"
  >
    <header className="flex h-[17px] shrink-0 items-center bg-white px-1 text-[#222]">
      <QgisLogo className="size-[10px]" />
      <h1 className="ml-[2px] flex-1">Data Source Manager | 矢量</h1>
      <button type="button" aria-label="关闭">
        <svg viewBox="0 0 8 8" className="size-[7px]" stroke="#333" strokeWidth="0.9">
          <path d="M.8.8l6.4 6.4M7.2.8L.8 7.2" />
        </svg>
      </button>
    </header>
    <div className="flex flex-1">
      <nav className="w-[153px] bg-[#5d5d5d]">
        <ul className="grid h-[344px] grid-rows-17">
          {sources.map(({ icon, label }) => {
            const active = icon === "vector";
            return (
              <li key={label} className={active ? "flex bg-[#efefef] text-[#222]" : "flex text-[#f0f0f0]"}>
                <button type="button" className="flex flex-1 items-center gap-[2px] pt-px pl-[2px] text-left">
                  <span className="relative flex">
                    <Icon name={icon} className={active ? "size-[18px]" : "size-4"} />
                    {icon !== "open" && (
                      <svg viewBox="9 9 7 7" className="absolute right-0 bottom-0 size-[6px]">
                        <PlusBadge />
                      </svg>
                    )}
                  </span>
                  {label}
                </button>
              </li>
            );
          })}
        </ul>
      </nav>
      <form className="flex flex-1 flex-col pr-[7px] pb-[7px] pl-[9px] font-['Liberation_Serif','Noto_Sans_CJK_SC',serif] text-[#222]">
        <h3 className="mt-2 h-[10px] leading-[10px] font-bold text-black">源类型</h3>
        <div className="flex h-[54px] flex-col rounded-xs border border-[#dcdcdc] bg-[#ebebeb] px-[6px]">
          <div className="mt-[13px] flex h-[10px] items-center gap-2">
            {types.map(({ label, key, rest }, i) => (
              <label key={key} className="flex items-center gap-[3px] whitespace-nowrap">
                <input
                  type="radio"
                  name="type"
                  defaultChecked={i === 0}
                  className="size-2 appearance-none rounded-full border border-[#c9c9c9] bg-white bg-radial checked:from-[#333] checked:from-40% checked:to-white checked:to-45%"
                />
                <span>
                  {label}
                  <Mnemonic>{key}</Mnemonic>
                  {rest}
                </span>
              </label>
            ))}
          </div>
          <div className="mt-[9px] flex items-center">
            <label htmlFor="encoding" className="flex-1">
              编码
            </label>
            <span className="relative flex w-[192px] items-center">
              <select
                id="encoding"
                className="h-[13px] w-full appearance-none rounded-xs border border-[#bdbdbd] bg-linear-to-b from-white to-[#f0f0f0] pl-[2px] leading-[11px]"
              >
                <option>自动</option>
              </select>
              <Caret className="absolute right-1 w-1" />
            </span>
          </div>
        </div>
        <h3 className="mt-[3px] h-[10px] leading-[10px] font-bold text-black">源</h3>
        <div className="flex h-[29px] items-center gap-[3px] rounded-xs border border-[#dcdcdc] bg-[#ebebeb] px-[6px]">
          <label htmlFor="dataset" className="shrink-0">
            矢量数据集
          </label>
          <input id="dataset" type="text" className="h-[13px] min-w-0 flex-1 rounded-xs border border-[#c9c9c9] bg-white px-1" />
          <button type="button" className="h-3 w-[19px] rounded-xs border border-[#c6c6c6] bg-linear-to-b from-white to-[#f0f0f0] leading-[10px] font-bold">
            ···
          </button>
        </div>
        <div className="mt-auto flex justify-end gap-1">
          <button type="button" className={`${dialogButton} font-['Liberation_Mono',monospace] text-[6px] font-bold`}>
            Close
          </button>
          <button type="button" disabled className={`${dialogButton} text-[#9c9c9c]`}>
            添加
            <Mnemonic>A</Mnemonic>
          </button>
          <button type="button" className={`${dialogButton} font-['Liberation_Mono',monospace] text-[6px] font-bold`}>
            Help
          </button>
        </div>
      </form>
    </div>
  </section>
);

/* ---------- status bar ---------- */

const SpinBox = ({ id, value, className }: { id: string; value: string; className: string }) => (
  <span className={`flex h-3 items-center border border-[#c6c6c6] bg-white pr-[2px] ${className}`}>
    <input id={id} defaultValue={value} className="min-w-0 flex-1 pl-[2px] font-['Liberation_Mono',monospace] text-[6px]" />
    <svg viewBox="0 0 6 12" className="h-2 w-1">
      <path d="M0 5l3-4 3 4zM0 7l3 4 3-4z" fill="#555" />
    </svg>
  </span>
);

const StatusBar = () => (
  <footer className="flex h-[15px] shrink-0 items-center pr-[3px] pl-[2px] text-[#222]">
    <label className="flex h-3 w-28 items-center rounded-xs border border-[#c9c9c9] bg-white pl-1">
      <Icon name="magnifier" className="size-[7px]" />
      <input
        type="text"
        aria-label="定位"
        placeholder="键入以定位(Ctrl+K)"
        className="ml-1 min-w-0 flex-1 placeholder:text-[#8c8c8c]"
      />
    </label>
    <label htmlFor="coords" className="mr-px ml-auto">
      坐标
    </label>
    <input id="coords" type="text" className="h-3 w-[61px] border border-[#c6c6c6] bg-white" />
    <Icon name="cog" className="mx-[2px] size-[10px]" />
    <label htmlFor="scale" className="mr-px ml-[3px]">
      比例尺
    </label>
    <span className="relative flex w-[46px] items-center">
      <select id="scale" className="h-3 w-full appearance-none border border-[#c6c6c6] bg-white font-['Liberation_Mono',monospace] text-[6px]">
        <option>:29854292</option>
      </select>
      <Caret className="absolute right-1 w-1" />
    </span>
    <Icon name="lock" className="mr-[3px] ml-[5px] size-[10px]" />
    <label htmlFor="magnifier">放大镜</label>
    <SpinBox id="magnifier" value="100%" className="mr-[5px] w-[52px]" />
    <label htmlFor="rotation">旋转角度</label>
    <SpinBox id="rotation" value="0.0°" className="mr-1 ml-[2px] w-[50px]" />
    <label className="flex items-center gap-[3px]">
      <span className="relative flex">
        <input type="checkbox" defaultChecked className="peer size-2 appearance-none border border-[#b5b5b5] bg-white" />
        <svg viewBox="0 0 8 8" className="pointer-events-none absolute inset-0 hidden size-2 peer-checked:block">
          <path d="M1.6 4l1.8 2.2L6.6 1.4" fill="none" stroke="#222" strokeWidth="1.2" />
        </svg>
      </span>
      渲染
    </label>
    <button type="button" className="ml-[7px] flex items-center gap-[2px] font-['Liberation_Mono',monospace] text-[6px]">
      <Icon name="crs" className="size-[10px]" />
      EPSG:4326
    </button>
    <button type="button" aria-label="消息" className="ml-[11px]">
      <Icon name="bubble" className="size-[11px]" />
    </button>
  </footer>
);

export default function App() {
  return (
    <div className="relative flex h-screen flex-col overflow-hidden bg-[#efefef] font-['Noto_Sans','Noto_Sans_CJK_SC',sans-serif] text-[7px] leading-[10px]">
      <header className="flex h-[13px] shrink-0 items-center bg-white pr-[10px] pl-px text-[#666]">
        <QgisLogo className="size-[10px]" />
        <span className="ml-[2px] flex-1">未命名的工程 - QGIS</span>
        <div className="flex items-center gap-[19px]">
          {["M0 4h7", "M.5 2h5v5h-5zM2 2V.5h5v5H5.5", "M.8.8l5.8 5.8M6.6.8L.8 6.6"].map((d, i) => (
            <button key={d} type="button" aria-label={["最小化", "还原", "关闭"][i]}>
              <svg viewBox="0 0 8 8" className="size-[7px]" fill="none" stroke="#909090">
                <path d={d} />
              </svg>
            </button>
          ))}
        </div>
      </header>

      <nav className="flex h-3 shrink-0 items-center gap-2 border-b border-[#dedede] pl-[6px] text-[#8a8a8a]">
        {menus.map(([label, key]) => (
          <button key={key} type="button">
            {label}
            <Mnemonic>{key}</Mnemonic>
          </button>
        ))}
      </nav>

      <ToolBar>
        <Handle />
        <Tools className="w-[109px]" names="new open save layoutNew layoutManager style" />
        <Handle />
        <Tools
          className="w-[258px]"
          names="hand panSelection zoomIn zoomOut zoomFull zoomSelection zoomLayer zoomNative zoomLast zoomNext mapView bookmarkNew bookmarks refresh"
        />
        <Handle />
        <Tools
          className="w-[254px]"
          names="identify action caret select caret selectForm caret deselect table calculator gear sigma measure caret mapTips annotation caret"
        />
      </ToolBar>
      <ToolBar>
        <Handle />
        <Tools className="w-[91px]" names="dataSource geopackageNew vectorNew featherNew memoryNew" />
        <Tools className="ml-[6px] w-4" names="virtualNew" />
        <Handle />
        <Tools
          className="w-[227px]"
          names="editsAll pencil saveGrey points vertexTool caret editForm trash cut copy paste undo redo"
        />
        <Handle />
        <Tools
          className="w-[174px]"
          names="label labelDiagram sep labelPin labelRed sep labelPinGrey labelShow labelMove labelRotate labelEdit"
        />
        <Handle />
        <Tools className="w-4" names="metasearch" />
        <Handle />
        <Tools className="w-4" names="python" />
        <Handle />
        <Tools className="w-4" names="help" />
        <Handle />
      </ToolBar>
      <ToolBar>
        <Handle />
        <Tools
          className="w-[345px] opacity-80"
          names="triangle points caret shapeMove shapeRotate shapeSimplify merge shapeMove shapeSimplify merge reshape offset split splitParts merge merge rotatePoint align rotateFeature caret"
        />
      </ToolBar>

      <div className="flex min-h-0 flex-1">
        <aside className="flex w-[169px] shrink-0 flex-col">
          <DockTitle title="浏览" />
          <DockTools names={["addLayer", "refresh", "filter", "collapse", "info"]} />
          <BrowserTree />
          <div className="flex h-[3px] shrink-0 items-center justify-center">
            <span className="w-3 border-t border-dotted border-[#bbb]" />
          </div>
          <DockTitle title="图层" />
          <DockTools names={["brush", "addGroup", "eye", "filter", "epsilon", "caret", "expand", "collapse", "removeLayer"]} />
          <div className="mr-1 flex-1 border border-[#cfcfcf] bg-white" />
        </aside>

        <main className="flex min-w-0 flex-1 flex-col">
          <h1 className="h-[17px] shrink-0 pl-[7px] text-[9px] leading-4 font-bold text-[#222]">工程模板</h1>
          <div className="ml-[2px] flex-1 border border-[#cbcbcb] bg-white px-1 pt-[3px]">
            <div className="h-[104px] rounded-md bg-[#efefef] p-1">
              <div className="h-full w-1/2 rounded-sm bg-[#fafafa] px-[9px] py-[9px]">
                <div className="h-full border border-dashed border-[#dcdcdc] bg-white" />
              </div>
            </div>
          </div>
          <div className="mt-1 flex h-[15px] shrink-0 items-center border border-[#a9b5a4] bg-[#dff0d8] pl-[2px] font-['Liberation_Mono','Noto_Sans_CJK_SC',monospace] text-[6px] text-[#222]">
            <strong>新版QGIS可用</strong>
            <span className="whitespace-pre">
              : Visit{" "}
              <a href="#download" className="text-[#3f9c1c] underline">
                https://download.qgis.org
              </a>{" "}
              to get your copy of version 3.14.15
            </span>
            <button type="button" aria-label="关闭消息" className="ml-auto">
              <svg viewBox="0 0 8 14" className="h-3 w-2">
                <path d="M7.500 1v12M1 6.500h7M1 12.500h7" stroke="#8b9a86" fill="none" />
              </svg>
            </button>
          </div>
        </main>
      </div>

      <StatusBar />
      <DataSourceManager />

      <svg viewBox="0 0 220 140" className="pointer-events-none absolute top-0 left-0 h-[140px] w-[220px]">
        <path d="M27 66L212 131" stroke="#ee3b3b" strokeWidth="1.1" />
        <path d="M219 133.500l-8.500.4 2.400-6z" fill="#f01818" />
      </svg>
      <svg viewBox="0 0 8 14" className="pointer-events-none absolute top-[111px] left-[374px] h-[14px] w-2">
        <path d="M4 .8L6.800 4H5v6h1.800L4 13.200 1.200 10H3V4H1.200z" fill="#fff" stroke="#444" strokeWidth="0.800" />
      </svg>
    </div>
  );
}
